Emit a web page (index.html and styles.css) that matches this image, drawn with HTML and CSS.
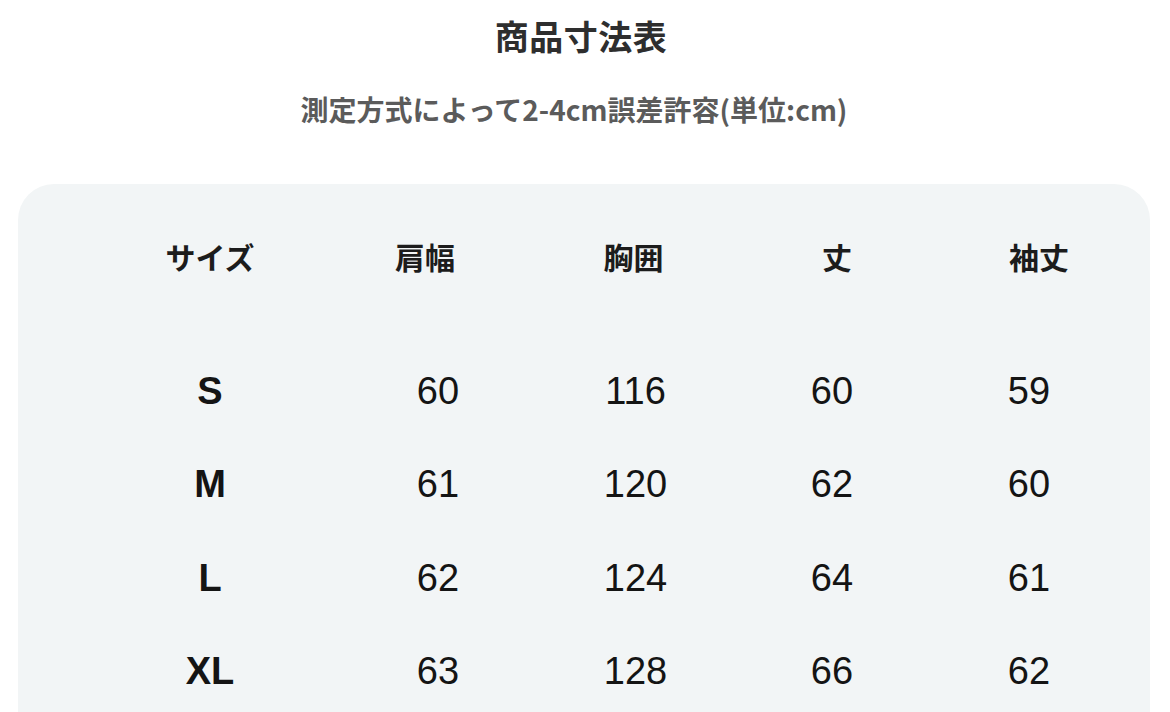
FILE: index.html
```html
<!DOCTYPE html>
<html lang="ja">
<head>
<meta charset="utf-8">
<title>商品寸法表</title>
<link rel="stylesheet" href="styles.css">
</head>
<body>
<div class="page">
  <h1 class="title">商品寸法表</h1>
  <p class="subtitle">測定方式によって2-4cm誤差許容(単位:cm)</p>
  <div class="panel">
    <div class="row head">
      <div class="cell">サイズ</div>
      <div class="cell">肩幅</div>
      <div class="cell">胸囲</div>
      <div class="cell">丈</div>
      <div class="cell">袖丈</div>
    </div>
    <div class="body">
      <div class="row data">
        <div class="cell size">S</div>
        <div class="cell">60</div>
        <div class="cell">116</div>
        <div class="cell">60</div>
        <div class="cell">59</div>
      </div>
      <div class="row data">
        <div class="cell size">M</div>
        <div class="cell">61</div>
        <div class="cell">120</div>
        <div class="cell">62</div>
        <div class="cell">60</div>
      </div>
      <div class="row data">
        <div class="cell size">L</div>
        <div class="cell">62</div>
        <div class="cell">124</div>
        <div class="cell">64</div>
        <div class="cell">61</div>
      </div>
      <div class="row data">
        <div class="cell size">XL</div>
        <div class="cell">63</div>
        <div class="cell">128</div>
        <div class="cell">66</div>
        <div class="cell">62</div>
      </div>
    </div>
  </div>
</div>
</body>
</html>
```
FILE: styles.css
```css
html, body {
  margin: 0;
  padding: 0;
  background: #ffffff;
}
body {
  width: 1170px;
  height: 712px;
  overflow: hidden;
  font-family: "Noto Sans CJK JP", "Noto Sans", sans-serif;
}
.page {
  display: flex;
  flex-direction: column;
  align-items: center;
}
.title {
  margin: 16px 0 0 0;
  font-size: 34px;
  line-height: 40px;
  font-weight: 700;
  color: #2e2e2e;
  letter-spacing: 0.5px;
  padding-right: 8px;
}
.subtitle {
  margin: 35px 0 0 0;
  font-size: 28px;
  line-height: 36px;
  font-weight: 700;
  color: #5b5b5b;
  padding-right: 22px;
}
.panel {
  align-self: stretch;
  margin: 57px 20px 0 18px;
  height: 600px;
  background: #f2f5f6;
  border-radius: 36px;
  padding-left: 81px;
}
.row {
  display: grid;
  grid-template-columns: 222px 212px 201px 200px 200px;
  align-items: center;
  justify-items: center;
}
.head {
  box-sizing: border-box;
  height: 152px;
  padding-bottom: 8px;
  font-family: "Noto Sans CJK JP", sans-serif;
  font-weight: 700;
  font-size: 30px;
  color: #1c1c1c;
}
.head .cell:nth-child(2) { margin-right: 4px; }
.head .cell:nth-child(4) { margin-left: 6px; }
.head .cell:nth-child(5) { margin-left: 10px; }
.body {
  margin-top: 9px;
}
.data {
  height: 93.3px;
  font-family: "Liberation Sans", Arial, sans-serif;
  font-size: 38px;
  color: #141414;
}
.data .cell:nth-child(2) { margin-left: 22px; }
.data .cell:nth-child(3) { margin-left: 4px; }
.data .cell:nth-child(4) { margin-left: -4px; }
.data .cell:nth-child(5) { margin-left: -10px; }
.size {
  font-weight: 700;
}
```
